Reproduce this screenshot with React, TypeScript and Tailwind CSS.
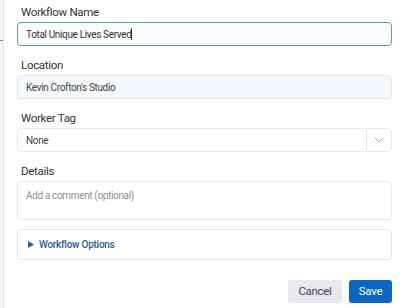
import React from "react";

export default function App() {
  const font = { fontFamily: "Roboto, 'Open Sans', sans-serif" };
  return (
    <div className="w-[400px] h-[308px] bg-[#fdfdfd] flex overflow-hidden" style={font}>
      <div className="w-[4px] h-full bg-[#f3f4f6] border-r border-[#e2e4e8] relative">
        <div className="absolute left-0 top-[40px] w-[3px] h-[1px] bg-[#888]" />
      </div>
      <div className="flex-1 flex flex-col pl-[13px] pr-[8px]">
        <div className="text-[11.5px] tracking-[-0.3px] text-[#333] mt-[4px] leading-[16px] pl-[4px]">Workflow Name</div>
        <div className="mt-[2px] h-[24px] rounded-[4px] border border-[#5a9ea0] bg-[#fbfcfd] flex items-center px-[8px] text-[10px] tracking-[-0.35px] text-[#333]">
          Total Unique Lives Served<span className="w-[1px] h-[12px] bg-[#333]" />
        </div>
        <div className="text-[11.5px] tracking-[-0.3px] text-[#333] mt-[11px] leading-[16px] pl-[4px]">Location</div>
        <div className="mt-[2px] h-[24px] rounded-[4px] border border-[#e4e8ee] bg-[#f5f8fb] flex items-center px-[8px] text-[10px] tracking-[-0.35px] text-[#444]">
          Kevin Crofton's Studio
        </div>
        <div className="text-[11.5px] tracking-[-0.3px] text-[#333] mt-[11px] leading-[16px] pl-[4px]">Worker Tag</div>
        <div className="mt-[2px] h-[24px] rounded-[4px] border border-[#e6e8ec] bg-white flex items-center text-[10px] tracking-[-0.35px] text-[#444]">
          <div className="flex-1 px-[8px]">None</div>
          <div className="w-[1px] h-[20px] bg-[#e2e4e8]" />
          <div className="w-[24px] flex items-center justify-center">
            <svg width="10" height="6" viewBox="0 0 10 6" fill="none">
              <path d="M1 1l4 4 4-4" stroke="#9aa0a8" strokeWidth="1" />
            </svg>
          </div>
        </div>
        <div className="text-[11.5px] tracking-[-0.3px] text-[#333] mt-[11px] leading-[16px] pl-[4px]">Details</div>
        <div className="mt-[2px] h-[39px] rounded-[4px] border border-[#e6e8ec] bg-white px-[8px] pt-[7px] text-[10px] tracking-[-0.35px] text-[#8a8f96] leading-[14px]">
          Add a comment (optional)
        </div>
        <div className="mt-[9px] h-[31px] rounded-[4px] border border-[#e2e5ea] bg-white flex items-center px-[10px] gap-[5px]">
          <svg width="6" height="7" viewBox="0 0 6 7">
            <path d="M0 0l6 3.5L0 7z" fill="#2d5d8e" />
          </svg>
          <span className="text-[10px] tracking-[-0.25px] font-medium text-[#2d5d8e]">Workflow Options</span>
        </div>
        <div className="mt-[20px] flex justify-end gap-[7px]">
          <button className="h-[23px] w-[54px] rounded-[3px] bg-[#e8e9ee] text-[11.5px] tracking-[-0.3px] text-[#444]">Cancel</button>
          <button className="h-[23px] w-[43px] rounded-[3px] bg-[#0b66c3] text-[11.5px] tracking-[-0.3px] text-white">Save</button>
        </div>
      </div>
    </div>
  );
}
